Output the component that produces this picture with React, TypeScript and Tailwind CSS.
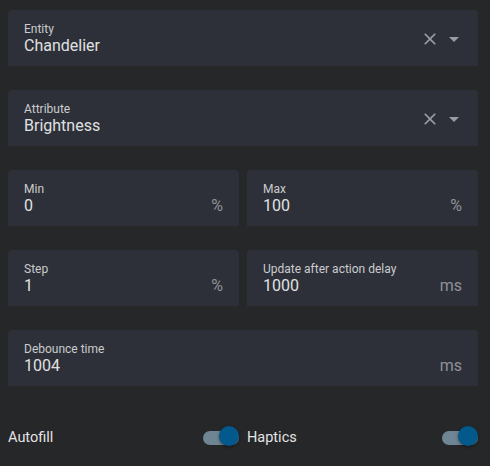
import React, { useState } from "react";

function CloseIcon() {
  return (
    <svg width="20" height="20" viewBox="0 0 24 24" className="shrink-0" fill="#9b9ca3">
      <path d="M19,6.41L17.59,5L12,10.59L6.41,5L5,6.41L10.59,12L5,17.59L6.41,19L12,13.41L17.59,19L19,17.59L13.41,12L19,6.41Z" />
    </svg>
  );
}

function ArrowIcon() {
  return (
    <svg width="24" height="24" viewBox="0 0 24 24" className="shrink-0" fill="#9b9ca3">
      <path d="M7 10l5 5 5-5z" />
    </svg>
  );
}

function SelectField({ label, value }: { label: string; value: string }) {
  return (
    <div className="flex h-14 items-center rounded-t bg-[#2d3038] pl-4 pr-3">
      <div className="flex min-w-0 flex-1 flex-col">
        <span className="pt-px text-[12px] leading-4 text-[#cbccce]">{label}</span>
        <span className="-mt-px text-[16px] leading-5 text-[#e0e0e2]">{value}</span>
      </div>
      <div className="mt-0.5 flex items-center gap-0.5">
        <CloseIcon />
        <ArrowIcon />
      </div>
    </div>
  );
}

function NumberField({ label, value, suffix }: { label: string; value: string; suffix?: string }) {
  return (
    <div className="flex h-14 items-center rounded-t bg-[#2d3038] px-4">
      <div className="flex min-w-0 flex-1 flex-col">
        <span className="pt-px text-[12px] leading-4 text-[#cbccce]">{label}</span>
        <span className="-mt-px text-[16px] leading-5 text-[#e0e0e2]">{value}</span>
      </div>
      {suffix && <span className="mt-4 text-[16px] leading-6 text-[#8f9196]">{suffix}</span>}
    </div>
  );
}

function Toggle({ on, onChange }: { on: boolean; onChange: () => void }) {
  return (
    <button type="button" onClick={onChange} className="relative h-5 w-9 shrink-0">
      <span className="absolute left-0 right-0 top-[3px] h-[14px] rounded-full bg-[#6f8593]" />
      <span
        className={
          "absolute top-[-2px] h-5 w-5 rounded-full bg-[#03588c] shadow-[0_1px_3px_rgba(0,0,0,0.5)] " +
          (on ? "left-[16px]" : "left-[-4px]")
        }
      />
    </button>
  );
}

export default function App() {
  const [autofill, setAutofill] = useState(true);
  const [haptics, setHaptics] = useState(true);

  return (
    <div className="h-[466px] w-[490px] overflow-hidden bg-[#262729] pl-2 pr-3 pt-2.5 font-['Roboto',sans-serif]">
      <div className="flex flex-col gap-6">
        <SelectField label="Entity" value="Chandelier" />
        <SelectField label="Attribute" value="Brightness" />
        <div className="grid grid-cols-2 gap-2">
          <NumberField label="Min" value="0" suffix="%" />
          <NumberField label="Max" value="100" suffix="%" />
        </div>
        <div className="grid grid-cols-2 gap-2">
          <NumberField label="Step" value="1" suffix="%" />
          <NumberField label="Update after action delay" value="1000" suffix="ms" />
        </div>
        <NumberField label="Debounce time" value="1004" suffix="ms" />
      </div>
      <div className="mt-[41px] grid grid-cols-2 gap-2">
        <div className="flex items-center justify-between">
          <span className="text-[14.5px] text-[#e3e3e5]">Autofill</span>
          <Toggle on={autofill} onChange={() => setAutofill((v) => !v)} />
        </div>
        <div className="flex items-center justify-between">
          <span className="text-[14.5px] text-[#e3e3e5]">Haptics</span>
          <Toggle on={haptics} onChange={() => setHaptics((v) => !v)} />
        </div>
      </div>
    </div>
  );
}
